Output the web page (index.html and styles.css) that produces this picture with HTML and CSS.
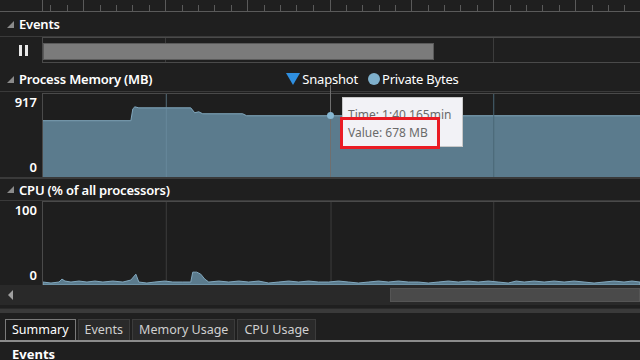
FILE: index.html
```html
<!DOCTYPE html>
<html lang="en">
<head>
  <meta charset="UTF-8" />
  <title>Diagnostic Tools</title>
  <link rel="stylesheet" href="styles.css">
</head>
<body>

<!-- Time ruler -->
<div class="ruler">
  <svg class="ruler-svg" viewBox="0 0 640 12">
    <g stroke="#5a5a5a" stroke-width="1">
      <line x1="0" y1="11.5" x2="640" y2="11.5" />
      <line x1="42.5" y1="0" x2="42.5" y2="12" />
      <line x1="83.5" y1="0" x2="83.5" y2="12" />
      <line x1="165.5" y1="0" x2="165.5" y2="12" />
      <line x1="247.5" y1="0" x2="247.5" y2="12" />
      <line x1="330.5" y1="0" x2="330.5" y2="12" />
      <line x1="411.5" y1="0" x2="411.5" y2="12" />
      <line x1="493.5" y1="0" x2="493.5" y2="12" />
      <line x1="575.5" y1="0" x2="575.5" y2="12" />
      <path d="M50.5 5v6M67.5 5v6M100.5 5v6M116.5 5v6M132.5 5v6M149.5 5v6M182.5 5v6M198.5 5v6M214.5 5v6M231.5 5v6M264.5 5v6M280.5 5v6M296.5 5v6M313.5 5v6M346.5 5v6M362.5 5v6M379.5 5v6M395.5 5v6M428.5 5v6M444.5 5v6M460.5 5v6M477.5 5v6M510.5 5v6M526.5 5v6M542.5 5v6M559.5 5v6M592.5 5v6M608.5 5v6M624.5 5v6" />
    </g>
  </svg>
</div>

<!-- Events -->
<div class="section-head">
  <span class="expander"></span>
  <span class="section-title">Events</span>
</div>
<div class="events-row">
  <div class="pause"><span></span><span></span></div>
  <div class="events-track">
    <div class="events-bar"></div>
  </div>
</div>

<!-- Process memory -->
<div class="section-head">
  <span class="expander"></span>
  <span class="section-title">Process Memory (MB)</span>
  <div class="legend">
    <span class="legend-item"><span class="tri"></span>Snapshot</span>
    <span class="legend-item"><span class="dot"></span>Private Bytes</span>
  </div>
</div>
<div class="chart-row mem-row">
  <div class="axis">
    <span>917</span>
    <span>0</span>
  </div>
  <div class="chart">
    <svg class="chart-svg" viewBox="0 0 598 84" preserveAspectRatio="none">
      <path d="M0 84V27H88L90 15L92 13L96 14H148L152 19L156 18L160 20H200L204 22H598V84Z" fill="#5b7b8d" />
      <path d="M0 27H88L90 15L92 13L96 14H148L152 19L156 18L160 20H200L204 22H598" fill="none" stroke="#82a9bf" stroke-width="1" />
      <line x1="123.5" y1="0" x2="123.5" y2="84" stroke="#6e8fa2" stroke-width="1" opacity="0.7" />
      <line x1="451.5" y1="0" x2="451.5" y2="84" stroke="#4a6676" stroke-width="1" />
    </svg>
    <div class="snap-line"></div>
    <div class="snap-dot"></div>
    <div class="tooltip">
      <div>Time: 1:40.165min</div>
      <div>Value: 678 MB</div>
    </div>
    <div class="highlight"></div>
  </div>
</div>

<!-- CPU -->
<div class="section-head cpu-head">
  <span class="expander"></span>
  <span class="section-title">CPU (% of all processors)</span>
</div>
<div class="chart-row">
  <div class="axis">
    <span>100</span>
    <span>0</span>
  </div>
  <div class="chart">
    <svg class="chart-svg" viewBox="0 0 598 84" preserveAspectRatio="none">
      <line x1="123.5" y1="0" x2="123.5" y2="84" stroke="#3c3c3c" stroke-width="1" />
      <line x1="288.5" y1="0" x2="288.5" y2="84" stroke="#3c3c3c" stroke-width="1" />
      <line x1="451.5" y1="0" x2="451.5" y2="84" stroke="#3c3c3c" stroke-width="1" />
      <path d="M0 84V81L8 82L16 81L19 78L22 80L28 81L36 80L44 81L52 80L60 81L70 80L80 81L88 79L93 73L96 81L104 82L112 81L122 80L130 81L140 81L148 81L150 71L154 71L158 73L162 78L166 81L176 80L186 81L196 80L206 81L216 80L226 82L236 81L246 80L256 81L266 80L276 81L286 81L296 80L306 81L316 82L326 81L336 80L346 81L356 80L366 81L376 81L386 82L396 81L406 80L416 81L426 80L436 81L446 80L456 81L466 82L474 80L482 81L492 80L502 81L512 80L522 81L532 80L542 81L552 82L562 81L572 80L582 81L590 80L598 81V84Z" fill="#5b7b8d" stroke="#82a9bf" stroke-width="1" />
    </svg>
  </div>
</div>

<!-- Horizontal scroll -->
<div class="hscroll">
  <span class="arrow-left"></span>
  <div class="scroll-track"><div class="scroll-thumb"></div></div>
</div>
<div class="splitter"></div>

<!-- Tabs -->
<div class="tabs">
  <span class="tab active">Summary</span>
  <span class="tab">Events</span>
  <span class="tab">Memory Usage</span>
  <span class="tab">CPU Usage</span>
</div>
<div class="summary">
  <div class="summary-title">Events</div>
</div>

</body>
</html>
```

FILE: styles.css
```css
body {
  margin: 0;
  width: 640px;
  height: 360px;
  overflow: hidden;
  background: #1f1f1f;
  color: #f1f1f1;
  font-family: "Noto Sans", "Open Sans", sans-serif;
  font-size: 12px;
}

.ruler {
  height: 12px;
}

.ruler-svg {
  display: block;
  width: 640px;
  height: 12px;
}

/* collapsible section headers */
.section-head {
  display: flex;
  align-items: center;
  height: 24px;
  padding-left: 7px;
  border-bottom: 1px solid #3a3a3a;
}

.expander {
  width: 0;
  height: 0;
  border-left: 7px solid transparent;
  border-bottom: 7px solid #8a8a8a;
  margin-right: 5px;
}

.section-title {
  font-size: 13px;
  font-weight: 600;
  color: #ffffff;
  letter-spacing: -0.2px;
}

.legend {
  display: flex;
  gap: 10px;
  margin-left: 134px;
}

.legend-item {
  display: flex;
  align-items: center;
  font-size: 13px;
  color: #ffffff;
  letter-spacing: -0.2px;
}

.tri {
  width: 0;
  height: 0;
  border-left: 7px solid transparent;
  border-right: 7px solid transparent;
  border-top: 12px solid #2f8fe0;
  margin-right: 2px;
}

.dot {
  width: 12px;
  height: 12px;
  border-radius: 50%;
  background: #7fb0cc;
  margin-right: 2px;
}

/* events swimlane */
.events-row {
  display: flex;
  height: 26px;
  margin-bottom: 4px;
}

.pause {
  display: flex;
  gap: 3px;
  width: 42px;
  justify-content: center;
  align-items: center;
  padding-left: 4px;
  box-sizing: border-box;
}

.pause span {
  width: 3px;
  height: 11px;
  background: #e8e8e8;
}

.events-track {
  flex: 1;
  border-top: 1px solid #4a4a4a;
  border-bottom: 1px solid #4a4a4a;
  border-left: 1px solid #4a4a4a;
  padding-top: 5px;
  background: linear-gradient(to right, transparent 122px, #3c3c3c 122px, #3c3c3c 123px, transparent 123px, transparent 450px, #3c3c3c 450px, #3c3c3c 451px, transparent 451px);
}

.events-bar {
  width: 391px;
  height: 17px;
  background: #7b7b7b;
  border: 1px solid #5a5a5a;
  box-sizing: border-box;
}

/* charts */
.chart-row {
  display: flex;
  height: 84px;
}

.mem-row {
  margin-top: 1px;
}

.axis {
  width: 42px;
  display: flex;
  flex-direction: column;
  justify-content: space-between;
  align-items: flex-end;
  padding: 1px 5px 2px 0;
  box-sizing: border-box;
  font-size: 13px;
  font-weight: 600;
  color: #ffffff;
  line-height: 16px;
}

.chart {
  position: relative;
  flex: 1;
  border-top: 1px solid #4a4a4a;
  border-left: 1px solid #4a4a4a;
  background: #1e1e1e;
}

.chart-svg {
  display: block;
  width: 100%;
  height: 100%;
}

.snap-line {
  position: absolute;
  left: 287px;
  top: -9px;
  bottom: 0;
  width: 1px;
  background: #6f6f6f;
}

.snap-dot {
  position: absolute;
  left: 284px;
  top: 18px;
  width: 7px;
  height: 7px;
  border-radius: 50%;
  background: #86b7d2;
}

.tooltip {
  position: absolute;
  left: 299px;
  top: 3px;
  width: 121px;
  height: 50px;
  box-sizing: border-box;
  padding: 8px 0 0 5px;
  background: #f2f2f6;
  border: 1px solid #c8c8c8;
  color: #6a6a6a;
  font-size: 12px;
  line-height: 18px;
}

.highlight {
  position: absolute;
  left: 297px;
  top: 23px;
  width: 100px;
  height: 32px;
  box-sizing: border-box;
  border: 3px solid #ea1c24;
}

.cpu-head {
  border-top: 2px solid #3a3a3a;
  height: 21px;
}

/* scroller */
.hscroll {
  display: flex;
  align-items: center;
  height: 20px;
  background: #292929;
}

.arrow-left {
  width: 0;
  height: 0;
  border-top: 5px solid transparent;
  border-bottom: 5px solid transparent;
  border-right: 5px solid #a0a0a0;
  margin: 0 6px 0 8px;
}

.scroll-track {
  flex: 1;
  display: flex;
  justify-content: flex-end;
}

.scroll-thumb {
  width: 250px;
  height: 14px;
  background: #4a4a4a;
  border: 1px solid #555555;
  box-sizing: border-box;
}

.splitter {
  height: 4px;
  margin: 3px 0 6px;
  background: #3a3a3a;
  border-top: 1px solid #2a2a2a;
}

/* bottom tabs */
.tabs {
  display: flex;
  gap: 2px;
  padding-left: 5px;
  border-bottom: 2px solid #8c8c8c;
}

.tab {
  padding: 1px 6px 2px;
  font-size: 12.5px;
  color: #d0d0d0;
  background: #2a2a2a;
  border: 1px solid #3c3c3c;
  border-bottom: none;
}

.tab.active {
  color: #ffffff;
  background: #1b1b1b;
  border-color: #7a7a7a;
}

.summary {
  padding: 3px 12px;
}

.summary-title {
  font-size: 13px;
  font-weight: 700;
  color: #ffffff;
}
```
